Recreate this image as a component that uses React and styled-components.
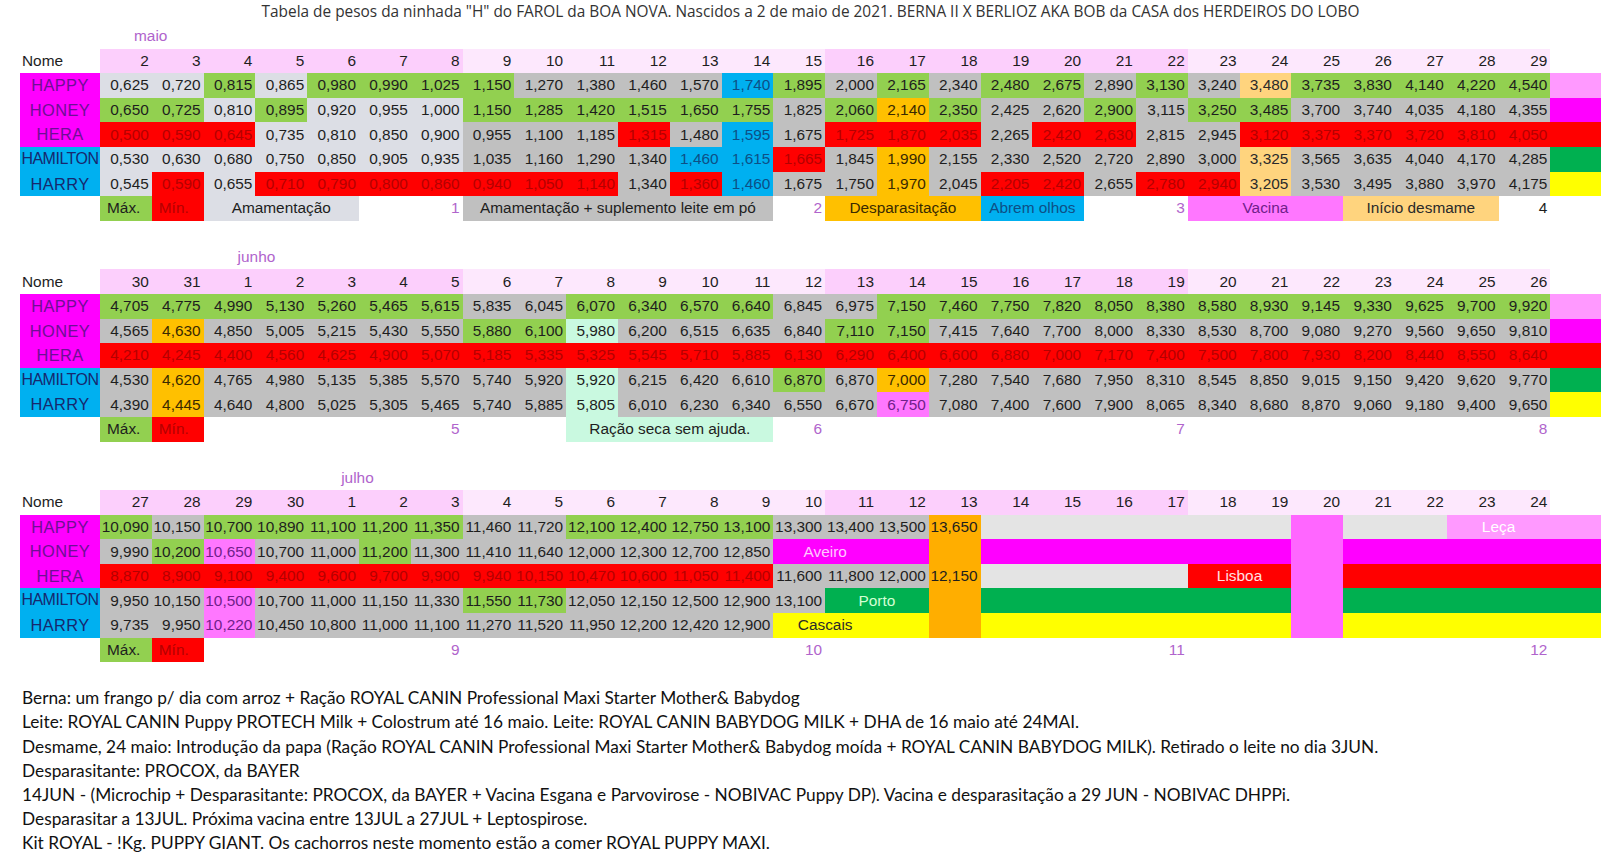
import React from "react";
import styled, { createGlobalStyle, css } from "styled-components";

const GlobalStyle = createGlobalStyle`
  body {
    margin: 0;
    background: #ffffff;
  }
`;

// bg / text colour for each cell code
const PALETTE = {
  L: ["#dcdee5", "#1e1e1e"],
  S: ["#c0c0c0", "#1e1e1e"],
  G: ["#92d050", "#1e1e1e"],
  R: ["#ff0000", "#b40000"],
  r: ["#ff0000", "#ffe2e2"],
  B: ["#00b0f0", "#0d4f86"],
  O: ["#ffc000", "#3a2a00"],
  Y: ["#ffd47e", "#2a2a2a"],
  P: ["#ff77ff", "#70208a"],
  M: ["#c9f9e0", "#1e1e1e"],
  Q: ["#ff99ff", "#ffffff"],
  F: ["#ff00ff", "#ffc8ff"],
  N: ["#00b050", "#d4ffd4"],
  Z: ["#ffff00", "#2a2a2a"],
  E: ["#e4e4e4", "#1e1e1e"],
  D: ["#ffae00", "#1e1e1e"],
  V: ["#ff66ff", "#1e1e1e"],
  W: ["transparent", "#1e1e1e"],
  K: ["transparent", "#b064cc"],
};

const ALIGN = { "<": "flex-start", ">": "flex-end", "^": "center" };

const COLUMNS = css`
  display: grid;
  grid-template-columns: 80px repeat(28, 51.8px) 51px;
`;

const Page = styled.div`
  width: 1611px;
  height: 853px;
  padding-left: 20px;
  box-sizing: border-box;
  font-family: "Liberation Sans", Arial, sans-serif;
  overflow: hidden;
`;

const Title = styled.div`
  width: 1581px;
  height: 24px;
  line-height: 24px;
  text-align: center;
  font-family: "Open Sans", "Liberation Sans", sans-serif;
  font-size: 15.4px;
  color: #333;
  white-space: nowrap;
`;

const Sheets = styled.div`
  display: flex;
  flex-direction: column;
  gap: 24px;
`;

const Sheet = styled.div`
  ${COLUMNS};
  grid-auto-rows: 24.6px;
  font-size: 15.4px;
`;

const MonthRow = styled.div`
  ${COLUMNS};
  grid-column: 1 / -1;
  height: 24px;
`;

const MonthLabel = styled.div`
  grid-column: ${(p) => p.$col} / span 2;
  padding-left: 34px;
  line-height: 24px;
  color: #b064cc;
  white-space: nowrap;
`;

const HeadName = styled.div`
  display: flex;
  align-items: center;
  padding-left: 2px;
  color: #1e1e1e;
`;

const DayHead = styled.div`
  display: flex;
  align-items: center;
  justify-content: flex-end;
  padding-right: 3px;
  color: #1e1e1e;
  background: ${(p) => (p.$pink ? "#fccffc" : "#fde8fd")};
`;

const NameCell = styled.div`
  line-height: 24.6px;
  text-align: center;
  white-space: nowrap;
  overflow: hidden;
  font-size: ${(p) => (p.$long ? "16px" : "16.4px")};
  letter-spacing: ${(p) => (p.$long ? "-0.5px" : "0.4px")};
  background: ${(p) => (p.$blue ? "#00b0f0" : "#ff00ff")};
  color: ${(p) => (p.$blue ? "#17286e" : "#6e0f94")};
`;

const Cell = styled.div`
  grid-column: span ${(p) => p.$span};
  display: flex;
  align-items: center;
  justify-content: ${(p) => ALIGN[p.$align]};
  padding: 0 3px 0 ${(p) => (p.$align === "<" ? "7px" : "3px")};
  white-space: nowrap;
  overflow: hidden;
  background: ${(p) => PALETTE[p.$code][0]};
  color: ${(p) => PALETTE[p.$code][1]};
`;

const Notes = styled.div`
  margin-top: 24px;
  padding-left: 2px;
  font-family: Lato, "Open Sans", sans-serif;
  font-size: 17.3px;
  line-height: 24.2px;
  color: #111;
  white-space: nowrap;
`;

const parse = (str) =>
  str.split("|").map((tok) => {
    const m = tok.match(/^([A-Za-z])(?:\*(\d+))?([<>^])?(?::(.*))?$/);
    return { code: m[1], span: Number(m[2] || 1), align: m[3] || ">", text: m[4] || "" };
  });

const TABLES = [
  {
    month: "maio",
    monthCol: 2,
    days: [2, 3, 4, 5, 6, 7, 8, 9, 10, 11, 12, 13, 14, 15, 16, 17, 18, 19, 20, 21, 22, 23, 24, 25, 26, 27, 28, 29],
    rows: [
      ["HAPPY", "L:0,625|L:0,720|G:0,815|L:0,865|G:0,980|G:0,990|G:1,025|G:1,150|S:1,270|S:1,380|S:1,460|S:1,570|B:1,740|G:1,895|S:2,000|G:2,165|S:2,340|G:2,480|G:2,675|S:2,890|G:3,130|S:3,240|Y:3,480|G:3,735|G:3,830|G:4,140|G:4,220|G:4,540|Q"],
      ["HONEY", "G:0,650|G:0,725|L:0,810|G:0,895|L:0,920|L:0,955|L:1,000|G:1,150|G:1,285|G:1,420|G:1,515|G:1,650|G:1,755|S:1,825|G:2,060|O:2,140|G:2,350|S:2,425|S:2,620|G:2,900|S:3,115|G:3,250|G:3,485|S:3,700|S:3,740|S:4,035|S:4,180|S:4,355|F"],
      ["HERA", "R:0,500|R:0,590|R:0,645|L:0,735|L:0,810|L:0,850|L:0,900|S:0,955|S:1,100|S:1,185|R:1,315|S:1,480|B:1,595|S:1,675|R:1,725|R:1,870|R:2,035|S:2,265|R:2,420|R:2,630|S:2,815|S:2,945|R:3,120|R:3,375|R:3,370|R:3,720|R:3,810|R:4,050|R"],
      ["HAMILTON", "L:0,530|L:0,630|L:0,680|L:0,750|L:0,850|L:0,905|L:0,935|S:1,035|S:1,160|S:1,290|S:1,340|B:1,460|B:1,615|R:1,665|S:1,845|O:1,990|S:2,155|S:2,330|S:2,520|S:2,720|S:2,890|S:3,000|Y:3,325|S:3,565|S:3,635|S:4,040|S:4,170|S:4,285|N"],
      ["HARRY", "L:0,545|R:0,590|L:0,655|R:0,710|R:0,790|R:0,800|R:0,860|R:0,940|R:1,050|R:1,140|S:1,340|R:1,360|B:1,460|S:1,675|S:1,750|O:1,970|S:2,045|R:2,205|R:2,420|S:2,655|R:2,780|R:2,940|Y:3,205|S:3,530|S:3,495|S:3,880|S:3,970|S:4,175|Z"],
    ],
    legend: "W|G<:Máx.|R<:Mín.|L*3^:Amamentação|W|K:1|S*6^:Amamentação + suplemento leite em pó|K:2|O*3^:Desparasitação|B*2^:Abrem olhos|W|K:3|P*3^:Vacina|Y*3^:Início desmame|W:4|W",
  },
  {
    month: "junho",
    monthCol: 4,
    days: [30, 31, 1, 2, 3, 4, 5, 6, 7, 8, 9, 10, 11, 12, 13, 14, 15, 16, 17, 18, 19, 20, 21, 22, 23, 24, 25, 26],
    rows: [
      ["HAPPY", "G:4,705|G:4,775|G:4,990|G:5,130|G:5,260|G:5,465|G:5,615|S:5,835|S:6,045|G:6,070|G:6,340|G:6,570|G:6,640|S:6,845|S:6,975|G:7,150|G:7,460|G:7,750|G:7,820|G:8,050|G:8,380|G:8,580|G:8,930|G:9,145|G:9,330|G:9,625|G:9,700|G:9,920|Q"],
      ["HONEY", "S:4,565|O:4,630|S:4,850|S:5,005|S:5,215|S:5,430|S:5,550|G:5,880|G:6,100|M:5,980|S:6,200|S:6,515|S:6,635|S:6,840|G:7,110|G:7,150|S:7,415|S:7,640|S:7,700|S:8,000|S:8,330|S:8,530|S:8,700|S:9,080|S:9,270|S:9,560|S:9,650|S:9,810|F"],
      ["HERA", "R:4,210|R:4,245|R:4,400|R:4,560|R:4,625|R:4,900|R:5,070|R:5,185|R:5,335|R:5,325|R:5,545|R:5,710|R:5,885|R:6,130|R:6,290|R:6,400|R:6,600|R:6,880|R:7,000|R:7,170|R:7,400|R:7,500|R:7,800|R:7,930|R:8,200|R:8,440|R:8,550|R:8,640|R"],
      ["HAMILTON", "S:4,530|O:4,620|S:4,765|S:4,980|S:5,135|S:5,385|S:5,570|S:5,740|S:5,920|M:5,920|S:6,215|S:6,420|S:6,610|G:6,870|S:6,870|O:7,000|S:7,280|S:7,540|S:7,680|S:7,950|S:8,310|S:8,545|S:8,850|S:9,015|S:9,150|S:9,420|S:9,620|S:9,770|N"],
      ["HARRY", "S:4,390|O:4,445|S:4,640|S:4,800|S:5,025|S:5,305|S:5,465|S:5,740|S:5,885|M:5,805|S:6,010|S:6,230|S:6,340|S:6,550|S:6,670|P:6,750|S:7,080|S:7,400|S:7,600|S:7,900|S:8,065|S:8,340|S:8,680|S:8,870|S:9,060|S:9,180|S:9,400|S:9,650|Z"],
    ],
    legend: "W|G<:Máx.|R<:Mín.|W*4|K:5|W*2|M*4^:Ração seca sem ajuda.|K:6|W*6|K:7|W*6|K:8|W",
  },
  {
    month: "julho",
    monthCol: 6,
    days: [27, 28, 29, 30, 1, 2, 3, 4, 5, 6, 7, 8, 9, 10, 11, 12, 13, 14, 15, 16, 17, 18, 19, 20, 21, 22, 23, 24],
    rows: [
      ["HAPPY", "G:10,090|S:10,150|G:10,700|G:10,890|G:11,100|G:11,200|G:11,350|S:11,460|S:11,720|G:12,100|G:12,400|G:12,750|G:13,100|S:13,300|S:13,400|S:13,500|D:13,650|E*6|V|E*2|Q*2^:Leça|Q"],
      ["HONEY", "S:9,990|G:10,200|P:10,650|S:10,700|S:11,000|G:11,200|S:11,300|S:11,410|S:11,640|S:12,000|S:12,300|S:12,700|S:12,850|F*2^:Aveiro|F|D|F*6|V|F*5"],
      ["HERA", "R:8,870|R:8,900|R:9,100|R:9,400|R:9,600|R:9,700|R:9,900|R:9,940|R:10,150|R:10,470|R:10,600|R:11,050|R:11,400|S:11,600|S:11,800|S:12,000|D:12,150|E*4|r*2^:Lisboa|V|R*5"],
      ["HAMILTON", "S:9,950|S:10,150|P:10,500|S:10,700|S:11,000|S:11,150|S:11,330|G:11,550|G:11,730|S:12,050|S:12,150|S:12,500|S:12,900|S:13,100|N*2^:Porto|D|N*6|V|N*5"],
      ["HARRY", "S:9,735|S:9,950|P:10,220|S:10,450|S:10,800|S:11,000|S:11,100|S:11,270|S:11,520|S:11,950|S:12,200|S:12,420|S:12,900|Z*2^:Cascais|Z|D|Z*6|V|Z*5"],
    ],
    legend: "W|G<:Máx.|R<:Mín.|W*4|K:9|W*6|K:10|W*6|K:11|W*6|K:12|W",
  },
];

const NOTES = [
  "Berna: um frango p/ dia com arroz + Ração ROYAL CANIN Professional Maxi Starter Mother& Babydog",
  "Leite: ROYAL CANIN Puppy PROTECH Milk + Colostrum até 16 maio. Leite: ROYAL CANIN BABYDOG MILK + DHA de 16 maio até 24MAI.",
  "Desmame, 24 maio: Introdução da papa (Ração ROYAL CANIN Professional Maxi Starter Mother& Babydog moída + ROYAL CANIN BABYDOG MILK). Retirado o leite no dia 3JUN.",
  "Desparasitante: PROCOX, da BAYER",
  "14JUN - (Microchip + Desparasitante: PROCOX, da BAYER + Vacina Esgana e Parvovirose - NOBIVAC Puppy DP). Vacina e desparasitação a 29 JUN - NOBIVAC DHPPi.",
  "Desparasitar a 13JUL. Próxima vacina entre 13JUL a 27JUL + Leptospirose.",
  "Kit ROYAL - !Kg. PUPPY GIANT. Os cachorros neste momento estão a comer ROYAL PUPPY MAXI.",
];

const renderCells = (str, prefix) =>
  parse(str).map((c, i) => (
    <Cell key={prefix + i} $code={c.code} $span={c.span} $align={c.align}>
      {c.text}
    </Cell>
  ));

const WeightSheet = ({ table }) => (
  <Sheet>
    <MonthRow>
      <MonthLabel $col={table.monthCol}>{table.month}</MonthLabel>
    </MonthRow>
    <HeadName>Nome</HeadName>
    {table.days.map((d, i) => (
      <DayHead key={"d" + i} $pink={Math.floor(i / 7) % 2 === 0}>
        {d}
      </DayHead>
    ))}
    <div />
    {table.rows.map(([name, cells]) => (
      <React.Fragment key={name}>
        <NameCell
          $blue={name === "HAMILTON" || name === "HARRY"}
          $long={name.length > 6}
        >
          {name}
        </NameCell>
        {renderCells(cells, name)}
      </React.Fragment>
    ))}
    {renderCells(table.legend, "leg")}
  </Sheet>
);

export default function App() {
  return (
    <Page>
      <GlobalStyle />
      <Title>
        Tabela de pesos da ninhada "H" do FAROL da BOA NOVA. Nascidos a 2 de maio de 2021. BERNA II X BERLIOZ AKA BOB da CASA dos HERDEIROS DO LOBO
      </Title>
      <Sheets>
        {TABLES.map((t) => (
          <WeightSheet key={t.month} table={t} />
        ))}
      </Sheets>
      <Notes>
        {NOTES.map((n) => (
          <div key={n}>{n}</div>
        ))}
      </Notes>
    </Page>
  );
}
